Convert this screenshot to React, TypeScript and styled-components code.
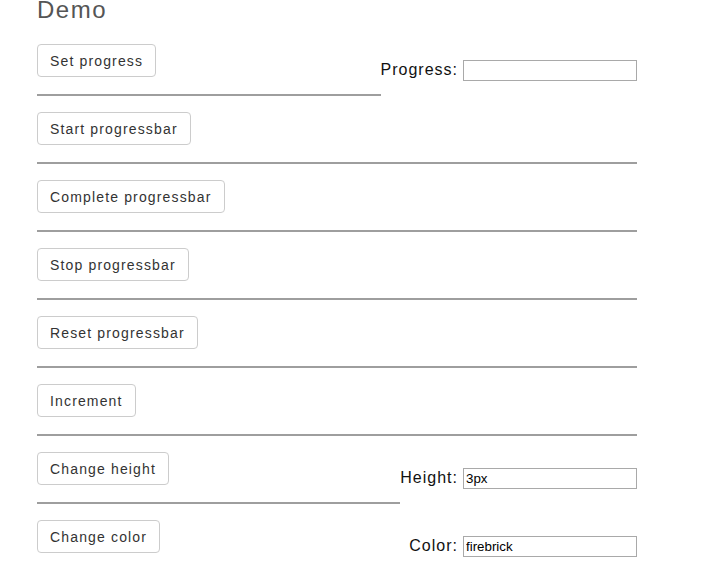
import styled, { createGlobalStyle } from 'styled-components';

const GlobalStyle = createGlobalStyle`
   body {
      margin: 0;
      background: #fff;
      font-family: 'Liberation Sans', Arial, sans-serif;
   }
`;

const Page = styled.div`
   width: 600px;
   padding: 0 37px;
`;

const Title = styled.h1`
   margin: 0 0 24px;
   font-size: 24px;
   line-height: 20px;
   font-weight: 400;
   letter-spacing: 1.5px;
   color: #555;
`;

const Section = styled.div``;

const ActionButton = styled.button`
   display: block;
   margin: 0;
   padding: 7px 12px 6px;
   font-family: 'Liberation Sans', Arial, sans-serif;
   font-size: 14px;
   line-height: 18px;
   letter-spacing: 1.15px;
   color: #333;
   background: #fff;
   border: 1px solid #ccc;
   border-radius: 4px;
   cursor: pointer;
`;

// floats right so the divider below gets cut short next to it
const Controls = styled.div`
   float: right;
   display: flex;
   align-items: center;
   height: 21px;
   margin: 16px 0 15px;
`;

const Label = styled.label`
   font-size: 16px;
   line-height: 18px;
   letter-spacing: 1px;
   color: #111;
   margin: 0 5px 2px 0;
`;

const TextInput = styled.input`
   box-sizing: border-box;
   width: 174px;
   height: 21px;
   padding: 1px 2px;
   font-family: 'Liberation Sans', Arial, sans-serif;
   font-size: 13.33px;
   color: #000;
   border: 1px solid #a9a9a9;
   outline: none;
`;

const Divider = styled.div`
   overflow: hidden;
   height: 2px;
   margin: 17px 0 16px;
   background: #9e9e9e;
`;

interface Row {
   label: string;
   field?: { name: string; value: string };
}

const rows: Row[] = [
   { label: 'Set progress', field: { name: 'Progress:', value: '' } },
   { label: 'Start progressbar' },
   { label: 'Complete progressbar' },
   { label: 'Stop progressbar' },
   { label: 'Reset progressbar' },
   { label: 'Increment' },
   { label: 'Change height', field: { name: 'Height:', value: '3px' } },
   { label: 'Change color', field: { name: 'Color:', value: 'firebrick' } },
];

export default function App() {
   return (
      <Page>
         <GlobalStyle />
         <Title>Demo</Title>
         {rows.map((row, i) => (
            <Section key={row.label}>
               {row.field && (
                  <Controls>
                     <Label>{row.field.name}</Label>
                     <TextInput type="text" defaultValue={row.field.value} />
                  </Controls>
               )}
               <ActionButton type="button">{row.label}</ActionButton>
               {i < rows.length - 1 && <Divider />}
            </Section>
         ))}
      </Page>
   );
}
